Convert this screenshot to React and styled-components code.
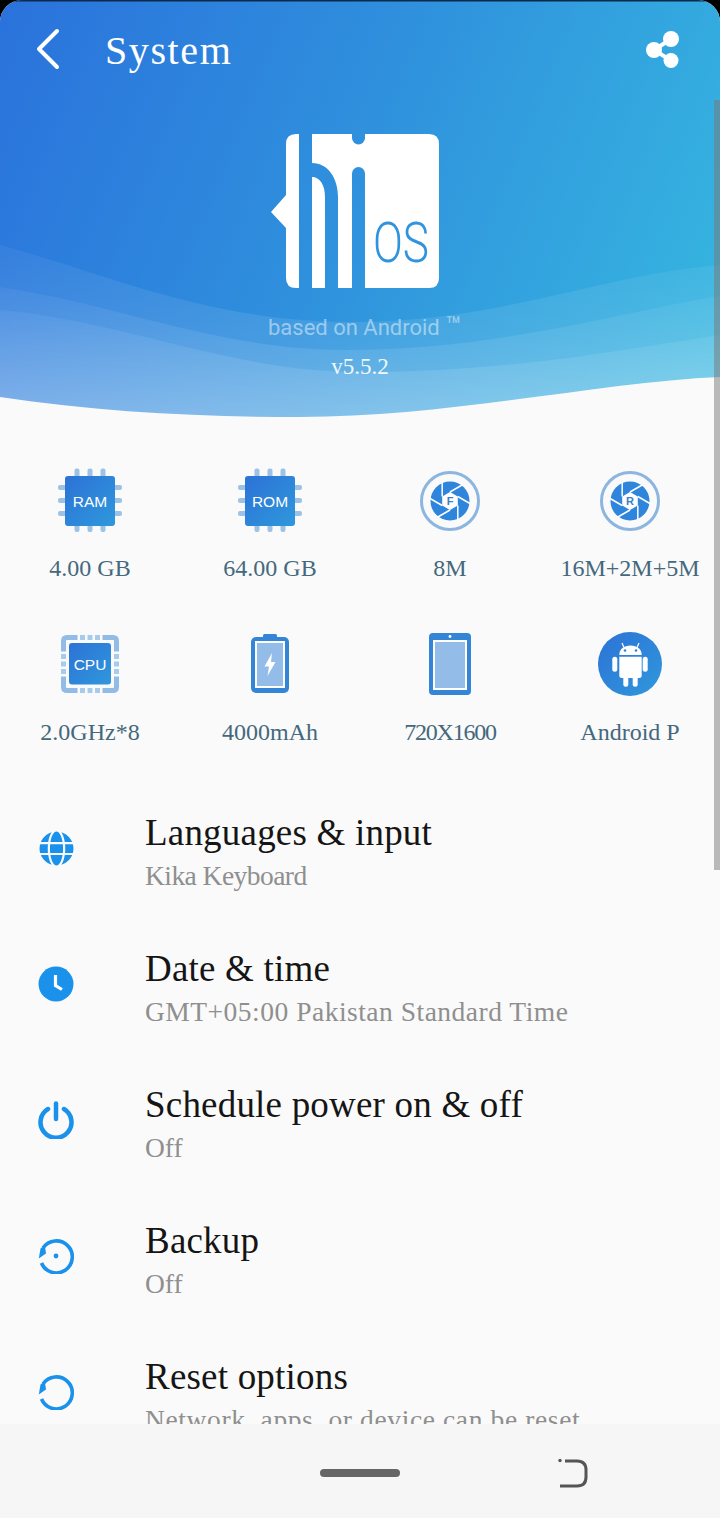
import React from "react";
import styled, { createGlobalStyle } from "styled-components";
import { FaGlobe } from "react-icons/fa";

const Global = createGlobalStyle`
  html, body {
    margin: 0;
    padding: 0;
    background: #000;
  }
  * {
    box-sizing: border-box;
  }
`;

const Screen = styled.div`
  position: relative;
  width: 720px;
  height: 1518px;
  overflow: hidden;
  background: #fafafa;
  border-radius: 22px 22px 0 0;
  font-family: "Liberation Serif", serif;
`;

const Header = styled.header`
  position: relative;
  height: 420px;
  background: linear-gradient(112deg, #2a72dc 0%, #2f8fdd 45%, #36b8e0 100%);
  box-shadow: inset 0 1.5px 0 #0c2a4c;
`;

const WaveArt = styled.svg`
  position: absolute;
  inset: 0;
  width: 720px;
  height: 420px;
`;

const HeaderBody = styled.div`
  position: relative;
  display: flex;
  flex-direction: column;
  align-items: center;
`;

const Toolbar = styled.div`
  width: 100%;
  height: 100px;
  padding: 0 39px 0 36px;
  display: flex;
  align-items: flex-start;
`;

const BackIcon = styled.svg`
  width: 24px;
  height: 42px;
  margin-top: 28px;
`;

const PageTitle = styled.h1`
  flex: 1;
  margin: 27px 0 0 45px;
  font-size: 40px;
  line-height: 48px;
  font-weight: 400;
  letter-spacing: 1.6px;
  color: #fff;
`;

const ShareIcon = styled.svg`
  width: 36px;
  height: 40px;
  margin-top: 30px;
`;

const Logo = styled.svg`
  display: block;
  width: 178px;
  height: 155px;
  margin-top: 34px;
`;

const BasedOn = styled.div`
  margin-top: 24px;
  padding-left: 10px;
  font-family: Roboto, sans-serif;
  font-size: 22px;
  line-height: 30px;
  color: rgba(255, 255, 255, 0.48);
  span {
    font-size: 26px;
    line-height: 0;
    margin-left: 6px;
  }
`;

const Version = styled.div`
  margin-top: 9px;
  font-size: 23px;
  line-height: 30px;
  color: rgba(255, 255, 255, 0.92);
`;

const SpecGrid = styled.section`
  display: grid;
  grid-template-columns: repeat(4, 180px);
  row-gap: 49px;
  padding-top: 48px;
`;

const Spec = styled.div`
  display: flex;
  flex-direction: column;
  align-items: center;
`;

const SpecIcon = styled.div`
  width: 64px;
  height: 64px;
  svg {
    display: block;
  }
`;

const SpecLabel = styled.div`
  margin-top: 21px;
  font-size: 24px;
  line-height: 30px;
  white-space: nowrap;
  letter-spacing: ${(p) => p.$track || 0}px;
  color: #44687c;
`;

const SettingsList = styled.section`
  margin-top: 37px;
`;

const Row = styled.div`
  display: grid;
  grid-template-columns: 112px 1fr;
  column-gap: 33px;
  align-items: center;
  height: 136px;
`;

const RowIcon = styled.div`
  display: flex;
  justify-content: center;
  margin-bottom: 8px;
  color: #1a92ec;
  font-size: 35px;
  line-height: 0;
`;

const RowTitle = styled.div`
  font-size: 37px;
  line-height: 44px;
  letter-spacing: 0.2px;
  color: #151515;
  white-space: nowrap;
`;

const RowSub = styled.div`
  margin-top: 4px;
  font-size: 27.5px;
  line-height: 34px;
  letter-spacing: ${(p) => p.$track || 0}px;
  color: #8f8f8f;
  white-space: nowrap;
`;

const ScrollThumb = styled.div`
  position: absolute;
  top: 100px;
  right: 0;
  width: 6px;
  height: 770px;
  background: rgba(120, 120, 120, 0.5);
`;

const NavBar = styled.nav`
  position: absolute;
  left: 0;
  right: 0;
  bottom: 0;
  height: 94px;
  padding-top: 4px;
  background: #f6f6f6;
  display: grid;
  grid-template-columns: repeat(3, 1fr);
  align-items: center;
  justify-items: center;
`;

const HomePill = styled.div`
  grid-column: 2;
  width: 80px;
  height: 8px;
  border-radius: 4px;
  background: #666;
`;

const RecentIcon = styled.svg`
  width: 30px;
  height: 32px;
  margin-right: 54px;
`;

const Chip = ({ label }) => (
  <svg width="64" height="64" viewBox="0 0 64 64">
    <defs>
      <linearGradient id={`chip-${label}`} x1="0" y1="0" x2="1" y2="1">
        <stop offset="0" stopColor="#2c72d6" />
        <stop offset="1" stopColor="#2f98dc" />
      </linearGradient>
    </defs>
    <g fill="#9cc3e6">
      {[19, 32, 45].map((p) => (
        <React.Fragment key={p}>
          <rect x={p - 2.5} y="0.5" width="5" height="9" rx="2" />
          <rect x={p - 2.5} y="55" width="5" height="9" rx="2" />
          <rect x="0" y={p - 2} width="9" height="5" rx="2" />
          <rect x="55" y={p - 2} width="9" height="5" rx="2" />
        </React.Fragment>
      ))}
    </g>
    <rect x="7" y="8" width="50" height="50" rx="3" fill={`url(#chip-${label})`} />
    <text x="32" y="38.5" textAnchor="middle" fontFamily="Liberation Sans, sans-serif" fontSize="15.5" fill="#fff">
      {label}
    </text>
  </svg>
);

const Cpu = () => (
  <svg width="64" height="64" viewBox="0 0 64 64">
    <defs>
      <linearGradient id="cpu-fill" x1="0" y1="0" x2="1" y2="1">
        <stop offset="0" stopColor="#2c72d6" />
        <stop offset="1" stopColor="#2f98dc" />
      </linearGradient>
    </defs>
    <g fill="none" stroke="#92bce6" strokeWidth="5">
      <path d="M5.5 19.5 V9 Q5.5 5.5 9 5.5 H19.5" />
      <path d="M44.5 5.5 H55 Q58.5 5.5 58.5 9 V19.5" />
      <path d="M58.5 44.5 V55 Q58.5 58.5 55 58.5 H44.5" />
      <path d="M19.5 58.5 H9 Q5.5 58.5 5.5 55 V44.5" />
    </g>
    <g fill="#a9cbeb">
      {[22, 29.5, 37].map((p) => (
        <React.Fragment key={p}>
          <rect x={p} y="3" width="5" height="5" />
          <rect x={p} y="56" width="5" height="5" />
          <rect x="3" y={p} width="5" height="5" />
          <rect x="56" y={p} width="5" height="5" />
        </React.Fragment>
      ))}
    </g>
    <rect x="11" y="11" width="42" height="41.5" rx="3" fill="url(#cpu-fill)" />
    <text x="32" y="37.5" textAnchor="middle" fontFamily="Liberation Sans, sans-serif" fontSize="15.5" fill="#fff">
      CPU
    </text>
  </svg>
);

const Battery = () => (
  <svg width="64" height="64" viewBox="0 0 64 64">
    <rect x="25" y="2" width="14" height="5" rx="1.5" fill="#3585d6" />
    <rect x="13" y="5" width="38" height="56" rx="5" fill="#3585d6" />
    <rect x="17" y="9" width="30" height="47" fill="#fff" />
    <rect x="19" y="11" width="26" height="43" fill="#93bce8" />
    <path d="M34 21 L26.5 34.5 H31 L29.5 44 L37.5 30 H33 Z" fill="#fff" />
  </svg>
);

const Tablet = () => (
  <svg width="64" height="64" viewBox="0 0 64 64">
    <rect x="11" y="1" width="42" height="62" rx="4" fill="#3585d6" />
    <rect x="15" y="8" width="34" height="50" fill="#fff" />
    <rect x="17" y="10" width="30" height="46" fill="#93bce8" />
    <circle cx="32" cy="4.5" r="1.4" fill="#fff" />
  </svg>
);

const Aperture = ({ letter }) => (
  <svg width="64" height="64" viewBox="0 0 64 64">
    <circle cx="32" cy="33" r="28.5" fill="none" stroke="#8cb6e0" strokeWidth="3" />
    <circle cx="32" cy="33" r="19.5" fill="#2f85dc" />
    <polygon points="32,24 39.8,28.5 39.8,37.5 32,42 24.2,37.5 24.2,28.5" fill="#fff" />
    {[0, 60, 120, 180, 240, 300].map((a) => (
      <line key={a} x1="32" y1="24" x2="45" y2="16.5" stroke="#fff" strokeWidth="1.5" transform={`rotate(${a} 32 33)`} />
    ))}
    <text x="32" y="37" textAnchor="middle" fontFamily="Liberation Sans, sans-serif" fontWeight="700" fontSize="11" fill="#3a7fc8">
      {letter}
    </text>
  </svg>
);

const AndroidBadge = () => (
  <svg width="64" height="64" viewBox="0 0 64 64">
    <defs>
      <linearGradient id="android-fill" x1="0" y1="0" x2="1" y2="1">
        <stop offset="0" stopColor="#2c72d6" />
        <stop offset="1" stopColor="#3098dc" />
      </linearGradient>
    </defs>
    <circle cx="32" cy="32" r="32" fill="url(#android-fill)" />
    <g fill="#fff">
      <path d="M21.3 23 C21.3 17 26 13.5 32.5 13.5 C39 13.5 43.7 17 43.7 23 Z" />
      <path d="M21.3 24.7 H43.7 V43.5 Q43.7 46 41 46 H24 Q21.3 46 21.3 43.5 Z" />
      <rect x="14.3" y="24.7" width="5" height="15" rx="2.5" />
      <rect x="44.7" y="24.7" width="5" height="15" rx="2.5" />
      <rect x="25.3" y="44" width="5" height="10.7" rx="2.5" />
      <rect x="34.7" y="44" width="5" height="10.7" rx="2.5" />
    </g>
    <path d="M26 15.5 L24 11 M39 15.5 L41 11" stroke="#fff" strokeWidth="1.2" />
    <circle cx="27" cy="18.5" r="1.3" fill="#2f85dc" />
    <circle cx="38" cy="18.5" r="1.3" fill="#2f85dc" />
  </svg>
);

const ClockIcon = () => (
  <svg width="36" height="36" viewBox="0 0 36 36">
    <circle cx="18" cy="18" r="17.5" fill="currentColor" />
    <path d="M17.5 9 V19.5 L24 23.5" fill="none" stroke="#fff" strokeWidth="3.2" />
  </svg>
);

const PowerIcon = () => (
  <svg width="36" height="38" viewBox="0 0 36 38">
    <path d="M10 8 A15.5 15.5 0 1 0 26 8" fill="none" stroke="currentColor" strokeWidth="4.5" strokeLinecap="round" />
    <path d="M18 2.5 V18" fill="none" stroke="currentColor" strokeWidth="4.5" strokeLinecap="round" />
  </svg>
);

const RestoreIcon = ({ dot }) => (
  <svg width="36" height="36" viewBox="0 0 36 36">
    <path d="M5 10 A16 16 0 1 1 3.5 25" fill="none" stroke="currentColor" strokeWidth="3.6" />
    <path d="M0.8 20.5 L8 15.5 L6.8 7.5 L2.5 10.5 Z" fill="currentColor" />
    {dot && <circle cx="18" cy="18" r="2.4" fill="currentColor" />}
  </svg>
);

const specs = [
  { icon: <Chip label="RAM" />, label: "4.00 GB" },
  { icon: <Chip label="ROM" />, label: "64.00 GB" },
  { icon: <Aperture letter="F" />, label: "8M" },
  { icon: <Aperture letter="R" />, label: "16M+2M+5M" },
  { icon: <Cpu />, label: "2.0GHz*8" },
  { icon: <Battery />, label: "4000mAh" },
  { icon: <Tablet />, label: "720X1600", track: -1.2 },
  { icon: <AndroidBadge />, label: "Android P" },
];

const settings = [
  { icon: <FaGlobe />, title: "Languages & input", sub: "Kika Keyboard", track: -0.55 },
  { icon: <ClockIcon />, title: "Date & time", sub: "GMT+05:00 Pakistan Standard Time", track: 0.5 },
  { icon: <PowerIcon />, title: "Schedule power on & off", sub: "Off" },
  { icon: <RestoreIcon dot />, title: "Backup", sub: "Off" },
  { icon: <RestoreIcon />, title: "Reset options", sub: "Network, apps, or device can be reset", track: 0.62 },
];

const App = () => (
  <>
    <Global />
    <Screen>
      <Header>
        <WaveArt viewBox="0 0 720 420">
          <defs>
            <linearGradient id="wave-fade" x1="0" y1="0" x2="0" y2="1">
              <stop offset="0" stopColor="#fff" stopOpacity="0.05" />
              <stop offset="1" stopColor="#fff" stopOpacity="0.16" />
            </linearGradient>
          </defs>
          <path d="M0 245 C110 275 210 322 350 322 C500 322 600 275 720 265 V420 H0 Z" fill="url(#wave-fade)" />
          <path d="M0 287 C120 305 220 350 345 350 C500 350 620 312 720 296 V420 H0 Z" fill="url(#wave-fade)" />
          <path d="M0 310 C130 322 230 372 360 372 C510 372 620 350 720 335 V420 H0 Z" fill="url(#wave-fade)" />
          <path d="M0 397 C100 412 200 417 300 417 C450 417 600 382 720 377 V420 H0 Z" fill="#fafafa" />
        </WaveArt>
        <HeaderBody>
          <Toolbar>
            <BackIcon viewBox="0 0 24 42">
              <path d="M21 3 L3 21 L21 39" fill="none" stroke="#fff" strokeWidth="4" strokeLinecap="round" strokeLinejoin="round" />
            </BackIcon>
            <PageTitle>System</PageTitle>
            <ShareIcon viewBox="0 0 36 40">
              <g fill="#fff">
                <circle cx="26" cy="9" r="8" />
                <circle cx="9" cy="20" r="8" />
                <circle cx="26" cy="30.5" r="7.5" />
              </g>
              <path d="M26 9 L9 20 L26 30.5" fill="none" stroke="#fff" strokeWidth="4" />
            </ShareIcon>
          </Toolbar>
          <Logo viewBox="271 134 178 155">
            <mask id="logo-cut">
              <path d="M271 212 L286 195 V144 Q286 134 296 134 H429 Q439 134 439 144 V278 Q439 288 429 288 H296 Q286 288 286 278 V228 Z" fill="#fff" />
              <rect x="299" y="130" width="13" height="162" fill="#000" />
              <path d="M312 163 C328 163 338 178 338 197 V292 H325 V197 C325 185 320 177 312 177 Z" fill="#000" />
              <path d="M352 130 H365 V138 A6.5 6.5 0 0 1 352 138 Z" fill="#000" />
              <path d="M352 173.5 A6.5 6.5 0 0 1 365 173.5 V292 H352 Z" fill="#000" />
            </mask>
            <rect x="271" y="134" width="178" height="155" fill="#fff" mask="url(#logo-cut)" />
            <text x="373" y="262" fontFamily="Roboto, sans-serif" fontWeight="300" fontSize="55" fill="#3093dd" textLength="56" lengthAdjust="spacingAndGlyphs">OS</text>
          </Logo>
          <BasedOn>based on Android<span>™</span></BasedOn>
          <Version>v5.5.2</Version>
        </HeaderBody>
      </Header>

      <SpecGrid>
        {specs.map((s) => (
          <Spec key={s.label}>
            <SpecIcon>{s.icon}</SpecIcon>
            <SpecLabel $track={s.track}>{s.label}</SpecLabel>
          </Spec>
        ))}
      </SpecGrid>

      <SettingsList>
        {settings.map((s) => (
          <Row key={s.title}>
            <RowIcon>{s.icon}</RowIcon>
            <div>
              <RowTitle>{s.title}</RowTitle>
              <RowSub $track={s.track}>{s.sub}</RowSub>
            </div>
          </Row>
        ))}
      </SettingsList>

      <ScrollThumb />
      <NavBar>
        <HomePill />
        <RecentIcon viewBox="0 0 30 32">
          <path d="M7 4 H19 Q28 4 28 13 V20 Q28 29 19 29 H2" fill="none" stroke="#555" strokeWidth="3" />
          <circle cx="2" cy="3.5" r="1.7" fill="#555" />
        </RecentIcon>
      </NavBar>
    </Screen>
  </>
);

export default App;
